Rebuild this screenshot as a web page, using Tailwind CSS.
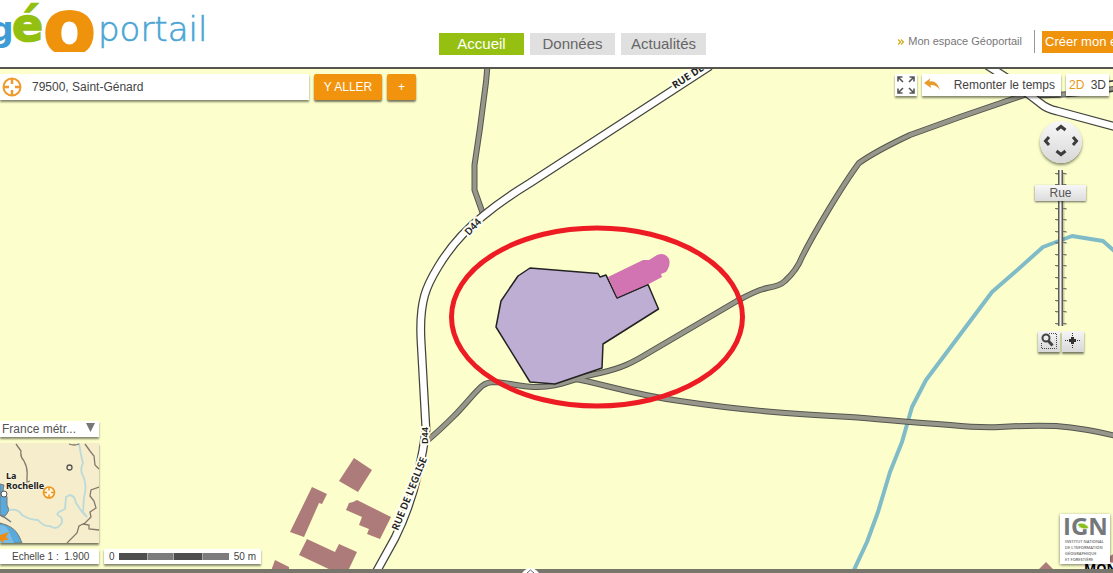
<!DOCTYPE html>
<html lang="fr">
<head>
  <meta charset="UTF-8" />
  <meta name="viewport" content="width=device-width, initial-scale=1" />
  <title>Géoportail</title>
  <script src="https://cdn.jsdelivr.net/npm/@tailwindcss/browser@4"></script>
</head>
<body class="h-screen flex flex-col overflow-hidden bg-white text-[#444] font-['Liberation_Sans',Arial,sans-serif]">

  <!-- Header -->
  <header class="h-[69px] shrink-0 flex items-start border-b-2 border-[#55564f] bg-white overflow-hidden">
    <a href="#" class="block w-[207px] shrink-0" aria-label="Géoportail">
      <svg class="block h-[52px] w-full" viewBox="0 0 207 52">
        <g font-family="DejaVu Sans" font-weight="700">
          <text x="-10" y="41" font-size="33" fill="#3d9bd6">g</text>
          <text x="12" y="41" font-size="46" fill="#93c010" stroke="#93c010" stroke-width="1.500">é</text>
          <text x="43" y="54" font-size="77" fill="#ef920c" stroke="#ef920c" stroke-width="2">o</text>
        </g>
        <text x="98" y="41" font-family="DejaVu Sans" font-weight="200" font-size="34" fill="#4aa5d5" stroke="#4aa5d5" stroke-width=".6">portail</text>
      </svg>
    </a>
    <nav class="ml-[232px] mt-[33px] flex gap-[6px] text-[15px] leading-[22px] text-center">
      <a href="#" class="w-[85px] bg-[#95c011] text-white">Accueil</a>
      <a href="#" class="w-[85px] bg-[#e0e0e0] text-[#666]">Données</a>
      <a href="#" class="w-[85px] bg-[#e0e0e0] text-[#666]">Actualités</a>
    </nav>
    <div class="ml-auto mt-[30px] flex items-center">
      <a href="#" class="flex items-center gap-1 text-[11px] text-[#777] whitespace-nowrap">
        <svg class="w-[6px] h-[6px]" viewBox="0 0 6 6" fill="none" stroke="#cfa70c" stroke-width="1.2"><path d="M0 .5L2.500 3L0 5.500M3 .5L5.500 3L3 5.500" /></svg>
        Mon espace Géoportail
      </a>
      <span class="ml-3 mr-[7px] w-px h-[23px] bg-[#999]"></span>
      <a href="#" class="w-[71px] h-[22px] pl-[3px] overflow-hidden whitespace-nowrap bg-[#ef920c] text-white text-[13px] leading-[22px]">Créer mon espace</a>
    </div>
  </header>

  <!-- Map -->
  <main class="relative flex-1 min-h-0 overflow-hidden bg-[#fcffcb]">
    <svg class="absolute inset-0 w-full h-full" viewBox="0 69 1113 500" preserveAspectRatio="xMinYMin slice" fill="none" stroke-linejoin="round">
      <defs>
        <path id="river" d="M853 572L867 542L878 512L890 472L902 442L912 407L926 380L950 348L992 292L1015 272L1043 247L1072 236L1103 241L1120 256" />
        <path id="north" d="M488 60L486 82L480 128L474.500 165V190L483 214" />
        <path id="east" d="M428 440C440 430 447 423 454 416C464 406 474 393 482 386Q487 382 495 382C510 383 520 387 534 387C560 388 572 378 600 373C622 368 632 363 650 352L737 301Q757 290 767 288Q780 286 785 281Q797 270 802 257C814 233 842 186 859 163Q876 151 910 135L960 117L1027 94Q1055 98 1120 88" />
        <path id="south" d="M575 379C600 383 630 394 680 401C740 410 780 413 850 417C880 419 905 422 950 425Q980 428 1000 427Q1030 425 1056 426Q1090 429 1120 437" />
        <path id="d44" d="M374 576L395 538C409 510 420 475 426 430L421 340C419 300 427 285 438 267C450 247 465 230 483 216C500 202 512 194 530 183L710 66" />
        <path id="d44b" d="M982 62L1010 80L1040 103Q1047 109 1057 111L1120 128" />
      </defs>
      <use href="#river" stroke="#80bbc8" stroke-width="4" />
      <g stroke="#55564f" stroke-width="6">
        <use href="#north" /><use href="#east" /><use href="#south" />
      </g>
      <g stroke="#96968a" stroke-width="4">
        <use href="#north" /><use href="#east" /><use href="#south" />
      </g>
      <path d="M1104 82L1120 80M1100 93L1120 90" stroke="#444" stroke-width="1.500" />
      <g stroke="#44443e" stroke-width="9">
        <use href="#d44" /><use href="#d44b" />
      </g>
      <g stroke="#fff" stroke-width="6.500">
        <use href="#d44" /><use href="#d44b" />
      </g>

      <!-- Buildings -->
      <g fill="#ad7b79">
        <path d="M354 458L372 470L358 492L339 481Z" />
        <path d="M312 487L327 494L322 504L319 503L304 537L290 532Z" />
        <path d="M349 503L353 502L357 500L391 517L380 539L367 534L369 529L359 525L362 517L346 510Z" />
        <path d="M307 539L335 552L339 544L357 552L348 571H333L299 555Z" />
        <path d="M275 560L289 567V571H271Z" />
        <path d="M1046 562L1055 571H1037ZM1110 556L1120 550V571H1108Z" />
      </g>

      <!-- Parcel -->
      <path d="M530 268L598 273.500L600 277L606 275L617 298L648 284.500L658.500 309L603 344L602 368L555 384L530 382L496 327L501 301L518 276Z" fill="#beaed4" stroke="#222" stroke-width="1.500" />
      <path d="M608 277L643 260L649 260L657 255Q665 252 669 259Q671 265 666 272L661 274L662 277L648 284.500L617 298Z" fill="#d274b2" />
      <path d="M606 275L617 298L648 284.500" stroke="#222" />
      <ellipse cx="597" cy="317" rx="145.500" ry="89" stroke="#ed1c24" stroke-width="5" />

      <!-- Road names -->
      <g font-family="Noto Sans" font-weight="700" fill="#222" stroke="#fffff2" stroke-width="4" paint-order="stroke">
        <text transform="translate(675 89) rotate(-33)" font-size="10">RUE DE</text>
        <text transform="translate(469 236) rotate(-47)" font-size="10" font-weight="600">D44</text>
        <text transform="translate(428 444) rotate(-90)" font-size="9" font-weight="600">D44</text>
        <text transform="translate(398 531) rotate(-68)" font-size="10" font-weight="600">RUE DE L'EGLISE</text>
        <text x="1084" y="573" font-size="13" fill="#000">MON</text>
      </g>
    </svg>

    <!-- Search -->
    <form class="absolute top-[5px] left-0 flex gap-[5px]" onsubmit="return false">
      <div class="flex items-center w-[309px] h-[26px] bg-white shadow-[0_2px_2px_#0007]">
        <svg class="w-6 h-6 shrink-0" viewBox="0 0 24 24" fill="none" stroke="#ef9a2c"><circle cx="12" cy="12" r="8.500" stroke-width="2" /><path d="M12 4v5M12 15v5M4 12h5M15 12h5" stroke-width="2.500" /></svg>
        <input type="text" aria-label="Adresse" value="79500, Saint-Génard" class="flex-1 min-w-0 h-full ml-1 px-1 text-[12px] text-[#444] outline-none" />
      </div>
      <button class="w-[68px] h-[26px] rounded-xs bg-[#f2930d] text-white text-[12px] shadow-[0_2px_2px_#0008]">Y ALLER</button>
      <button type="button" aria-label="Plus" class="w-[29px] h-[26px] rounded-xs bg-[#f2930d] text-white text-[12px] shadow-[0_2px_2px_#0008]">+</button>
    </form>

    <!-- Top right tools -->
    <div class="absolute top-[5px] right-[4px] flex gap-[5px] h-[22px] text-[12px]">
      <button aria-label="Plein écran" class="w-[22px] bg-white shadow-[0_2px_2px_#0007]">
        <svg class="w-[22px] h-[22px]" viewBox="0 0 22 22" fill="none" stroke="#555" stroke-width="1.600"><path d="M3 7.500V3H7.500M3 3L8 8M14.500 3H19V7.500M19 3L14 8M3 14.500V19H7.500M3 19L8 14M14.500 19H19V14.500M19 19L14 14" /></svg>
      </button>
      <button class="flex items-center w-[139px] pl-[2px] pr-[6px] justify-between bg-white shadow-[0_2px_2px_#0007]">
        <svg class="w-4 h-4" viewBox="0 0 16 16"><path d="M0 6L6 1.500L5.500 4.500Q13 3 16 13Q12 7.500 6.500 8L7 11Z" fill="#e79b2b" /></svg>
        Remonter le temps
      </button>
      <div class="flex items-center justify-between w-[43px] px-[3px] bg-white shadow-[0_2px_2px_#0007]">
        <button class="text-[#e59a1a]">2D</button>
        <button>3D</button>
      </div>
    </div>

    <!-- Navigation -->
    <div class="absolute top-[52px] right-[27px] w-[51px] flex flex-col items-center">
      <div class="relative w-[42px] h-[42px] rounded-full bg-linear-to-b from-[#f8f8f8] to-[#d8d8d8] shadow-[0_2px_3px_#0007]">
        <svg class="absolute inset-0" viewBox="0 0 42 42" fill="none" stroke="#3c3c3c" stroke-width="3"><path d="M16.500 9L21 5.500L25.500 9M16.500 30L21 33.500L25.500 30M9 16L5.500 20L9 24M33 16L36.500 20L33 24" /></svg>
        <button aria-label="Haut" class="absolute top-0 left-[14px] size-[14px]"></button>
        <button aria-label="Bas" class="absolute bottom-0 left-[14px] size-[14px]"></button>
        <button aria-label="Gauche" class="absolute left-0 top-[14px] size-[14px]"></button>
        <button aria-label="Droite" class="absolute right-0 top-[14px] size-[14px]"></button>
      </div>
      <div class="relative mt-[6px] w-full h-[158px]">
        <svg class="block w-full h-full" viewBox="0 0 51 158" fill="none">
          <path d="M21 5h11M21 16h11M21 28h11M21 40h11M21 51h11M21 63h11M21 74h11M21 86h11M21 97h11M21 109h11M21 120h11M21 132h11M21 143h11M21 155h11M28.500 3V157" stroke="#0003" stroke-width="2" />
          <path d="M20 4h11M20 15h11M20 27h11M20 39h11M20 50h11M20 62h11M20 73h11M20 85h11M20 96h11M20 108h11M20 119h11M20 131h11M20 142h11M20 154h11" stroke="#77776a" transform="translate(0 .5)" />
          <path d="M25.500 1V157" stroke="#5c5c55" stroke-width="5" />
          <path d="M25.500 1V157" stroke="#f4f4f0" stroke-width="2" />
        </svg>
        <label for="zoom" class="absolute top-[16px] left-0 w-full h-[16px] bg-linear-to-b from-[#f7f7f7] to-[#dcdcdc] text-center text-[12px] leading-[16px] text-[#555] shadow-[0_1px_2px_#0009]">Rue</label>
        <input id="zoom" type="range" min="0" max="13" value="11" class="absolute inset-0 w-full h-full opacity-0 [writing-mode:vertical-lr] [direction:rtl]" />
      </div>
      <div class="mt-1 flex gap-[2px]">
        <button aria-label="Zoom sur une zone" class="w-[22px] h-[21px] bg-linear-to-b from-[#f5f5f5] to-[#d8d8d8] shadow-[0_2px_2px_#0008]">
          <svg viewBox="0 0 22 21" fill="none" stroke="#444"><path d="M11 2.500H18.500V17.500H3.500V11" stroke-dasharray="1 1" /><circle cx="8" cy="7" r="3.500" stroke-width="2" /><path d="M10.500 10L14.500 14.500" stroke-width="3" /></svg>
        </button>
        <button aria-label="Centrer" class="w-[22px] h-[21px] bg-linear-to-b from-[#f5f5f5] to-[#d8d8d8] shadow-[0_2px_2px_#0008]">
          <svg viewBox="0 0 22 21" fill="none" stroke="#333"><path d="M3 9.500H19M10.500 2V18" stroke-dasharray="1 1" /><path d="M7 9.500H14M10.500 6V13" stroke-width="3" /></svg>
        </button>
      </div>
    </div>

    <!-- Overview and scale -->
    <div class="absolute bottom-[5px] left-0 flex flex-col gap-[6px]">
      <div class="relative w-[99px] h-[16px] bg-white shadow-[0_2px_2px_#0007]">
        <select aria-label="Territoire" class="block w-full h-full pl-[2px] appearance-none text-[12px] leading-[16px] text-[#555] outline-none">
          <option>France métr...</option>
        </select>
        <svg class="absolute right-[3px] top-[2px] w-[11px] h-[9px] pointer-events-none" viewBox="0 0 11 9"><path d="M1 0H10L5.500 9Z" fill="#777" /></svg>
      </div>
      <svg class="block w-[99px] h-[100px] shadow-[0_2px_2px_#0008]" viewBox="0 0 99 100" fill="none">
        <path d="M0 0H99V100H0Z" fill="#f5edcc" />
        <path d="M0 41L4 42L3 47L7 54V62L9 67L6 72L3 74L0 72ZM0 80Q14 83 19 93L22 100H0Z" fill="#5aa9dc" stroke="#7b7b70" />
        <path d="M0 72L4 74L11 79" stroke="#777" stroke-width="1.500" />
        <path d="M0 82Q7 82 10 91L14 100H0Z" fill="#77bce5" />
        <path d="M9 67Q18 65 22 72Q30 77 38 77Q44 84 50 83Q54 86 58 84Q64 80 61 74Q55 72 59 69L65 66L66 54L70 52Q75 53 76 60L82 69L87 74M79 0Q81 13 83 20Q79 27 84 35Q87 45 84 54L83 69L87 74" stroke="#bbdad9" stroke-width="1.800" />
        <path d="M16 1L21 8Q20 14 24 18Q28 25 27 34V39L30 38M85 1L90 8L94 13L95 22L99 26M69 1Q74 3 79 1M99 44L91 47L90 53L94 58L96 65L90 69L91 74L85 80L79 83L77 90L67 100M83 81L89 82V86L99 87" stroke="#83796b" stroke-width="1.300" />
        <circle cx="69.500" cy="24.500" r="2.500" stroke="#555" stroke-width="1.300" />
        <circle cx="4" cy="51" r="3" fill="#fff" stroke="#555" />
        <g font-family="Noto Sans" font-weight="700" font-size="9" fill="#222" stroke="#f8f4dc" stroke-width="2" paint-order="stroke">
          <text x="6" y="36">La</text>
          <text x="6" y="46">Rochelle</text>
        </g>
        <g stroke="#ef9516"><circle cx="49" cy="49.500" r="5.500" fill="#fbf6e4" stroke-width="1.600" /><path d="M49 44v3.500M49 51.500v3.500M43.500 49.500h3.500M51 49.500h3.500" stroke-width="1.500" /></g>
        <path d="M0 92L9 89L6 94L9 97L4 97L3 100L0 97Z" fill="#ef8c16" />
      </svg>
      <div class="flex gap-[5px] h-[15px] text-[10px] leading-[15px]">
        <div class="w-[99px] pl-3 whitespace-pre bg-white shadow-[0_2px_2px_#0007]">Echelle 1 :  1.900</div>
        <div class="w-[157px] px-[5px] flex items-center justify-between bg-white shadow-[0_2px_2px_#0007]">
          <span>0</span>
          <div class="flex w-[110px] h-[7px] bg-[#4e4e4e]">
            <span class="w-1/4"></span>
            <span class="w-1/4 bg-[#7c7c7c] border-x border-[#aaa]"></span>
            <span class="w-1/4"></span>
            <span class="w-1/4 bg-[#7c7c7c] border-l border-[#aaa]"></span>
          </div>
          <span>50 m</span>
        </div>
      </div>
    </div>

    <!-- IGN -->
    <a href="#" aria-label="IGN" class="absolute bottom-[5px] right-[3px] w-[50px] h-[50px] bg-white shadow-[0_1px_3px_#0008]">
      <svg class="block w-full h-full" viewBox="0 0 50 50">
        <text x="3" y="21" font-family="Open Sans" font-weight="700" font-size="24" fill="#75787b">IGN</text>
        <path d="M17 10Q25 7 29 14Q21 17 17 10Z" fill="#8bbf1d" stroke="#fff" stroke-width=".7" />
        <g font-family="Open Sans" font-weight="600" font-size="4" fill="#666">
          <text x="5" y="29">INSTITUT NATIONAL</text>
          <text x="5" y="35">DE L'INFORMATION</text>
          <text x="5" y="41">GÉOGRAPHIQUE</text>
          <text x="5" y="47">ET FORESTIÈRE</text>
        </g>
      </svg>
    </a>
  </main>

  <!-- Bottom bar -->
  <footer class="relative h-[4px] shrink-0 bg-[#77756c]">
    <button aria-label="Ouvrir le panneau" class="absolute bottom-0 left-[522px] w-[17px] h-[5px]">
      <svg class="block w-full h-full" viewBox="0 0 17 5"><path d="M0 5Q8.500 -5 17 5Z" fill="#fff" /><path d="M5 5L8.500 2L12 5" fill="none" stroke="#666" /></svg>
    </button>
  </footer>
</body>
</html>
